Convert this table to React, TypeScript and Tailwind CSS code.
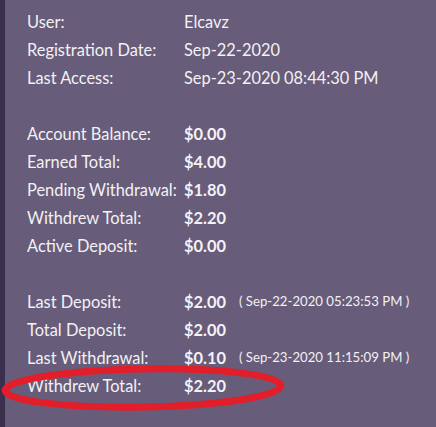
import React from 'react';

type Row = { label: string; value?: string; bold?: boolean; note?: string };

const groups: Row[][] = [
  [
    { label: 'User:', value: 'Elcavz' },
    { label: 'Registration Date:', value: 'Sep-22-2020' },
    { label: 'Last Access:', value: 'Sep-23-2020 08:44:30 PM' },
  ],
  [
    { label: 'Account Balance:', value: '$0.00', bold: true },
    { label: 'Earned Total:', value: '$4.00', bold: true },
    { label: 'Pending Withdrawal:', value: '$1.80', bold: true },
    { label: 'Withdrew Total:', value: '$2.20', bold: true },
    { label: 'Active Deposit:', value: '$0.00', bold: true },
  ],
  [
    { label: 'Last Deposit:', value: '$2.00', bold: true, note: '( Sep-22-2020 05:23:53 PM )' },
    { label: 'Total Deposit:', value: '$2.00', bold: true },
    { label: 'Last Withdrawal:', value: '$0.10', bold: true, note: '( Sep-23-2020 11:15:09 PM )' },
    { label: 'Withdrew Total:', value: '$2.20', bold: true },
  ],
];

function InfoRow({ row }: { row: Row }) {
  return (
    <div className="flex items-center h-[28px]">
      <span className="w-[157px] shrink-0">{row.label}</span>
      <span className={row.bold ? 'font-bold' : ''}>{row.value}</span>
      {row.note && <span className="ml-[13px] text-[13.2px]">{row.note}</span>}
    </div>
  );
}

export default function App() {
  return (
    <div className="relative w-[436px] h-[427px] flex bg-[#675c79] overflow-hidden font-['Lato','Noto_Sans',sans-serif] text-[16.4px] text-[#f3f1f5]">
      {/* dark sidebar edge */}
      <div className="w-[5px] shrink-0 bg-[#3a2f4d]" />

      <div className="flex flex-col gap-[28px] pl-[22px] pt-[8px]">
        {groups.map((g, i) => (
          <div key={i}>
            {g.map((r) => (
              <InfoRow key={r.label + i} row={r} />
            ))}
          </div>
        ))}
      </div>

      {/* red marker annotation */}
      <svg
        className="absolute left-0 top-[360px] pointer-events-none"
        width="300"
        height="60"
        viewBox="0 0 300 60"
      >
        <ellipse
          cx="143"
          cy="28"
          rx="138"
          ry="19"
          fill="none"
          stroke="#e31e2b"
          strokeWidth="7"
          transform="rotate(-1 143 28)"
        />
      </svg>
    </div>
  );
}
